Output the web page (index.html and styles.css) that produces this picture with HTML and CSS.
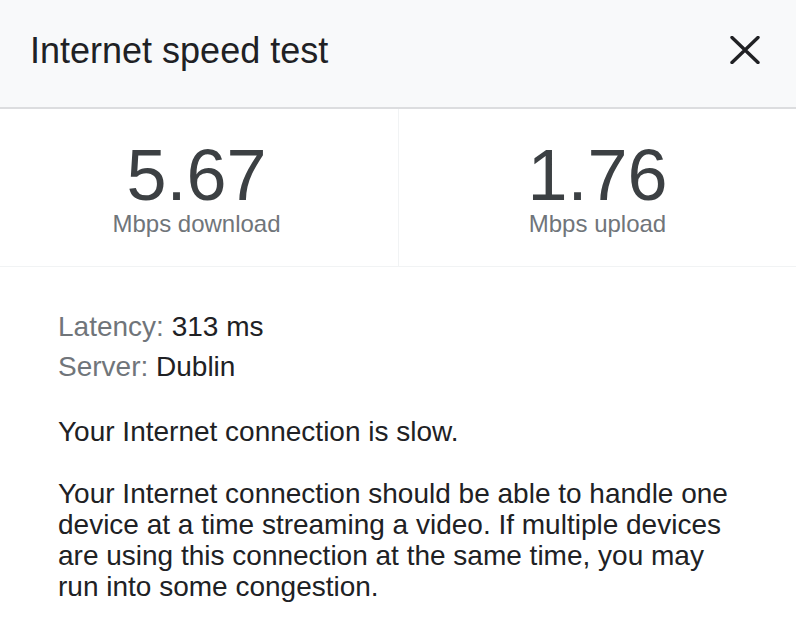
FILE: index.html
```html
<!DOCTYPE html>
<html lang="en">
<head>
<meta charset="utf-8">
<title>Internet speed test</title>
<link rel="stylesheet" href="styles.css">
</head>
<body>
<div class="dialog">
  <header class="header">
    <h1 class="title">Internet speed test</h1>
    <button class="close" aria-label="Close">
      <svg width="30" height="28" viewBox="0 0 30 28" aria-hidden="true">
        <path d="M2 1.5 L28 26.5 M28 1.5 L2 26.5" stroke="#202124" stroke-width="3.4" stroke-linecap="round" fill="none"/>
      </svg>
    </button>
  </header>
  <section class="stats">
    <div class="stat">
      <div class="stat-value">5.67</div>
      <div class="stat-label">Mbps download</div>
    </div>
    <div class="stat">
      <div class="stat-value">1.76</div>
      <div class="stat-label">Mbps upload</div>
    </div>
  </section>
  <section class="details">
    <div class="info">
      <div class="info-row"><span class="info-key">Latency:</span> 313 ms</div>
      <div class="info-row"><span class="info-key">Server:</span> Dublin</div>
    </div>
    <p class="verdict">Your Internet connection is slow.</p>
    <p class="explain">Your Internet connection should be able to handle one device at a time streaming a video. If multiple devices are using this connection at the same time, you may run into some congestion.</p>
  </section>
</div>
</body>
</html>
```

FILE: styles.css
```css
* { box-sizing: border-box; }
html, body {
  margin: 0;
  padding: 0;
  background: #ffffff;
}
body {
  font-family: "Liberation Sans", Arial, sans-serif;
  color: #202124;
}
.dialog {
  width: 796px;
  min-height: 632px;
  background: #fff;
}
.header {
  height: 109px;
  padding: 31px 36px 0 30px;
  background: #f8f9fa;
  border-bottom: 2px solid #dcdddf;
  display: flex;
  align-items: flex-start;
  justify-content: space-between;
}
.title {
  margin: 0;
  font-size: 36px;
  line-height: 40px;
  font-weight: normal;
  color: #202124;
}
.close {
  border: 0;
  padding: 0;
  margin-top: 5px;
  background: transparent;
  width: 30px;
  height: 28px;
  display: flex;
}
.stats {
  display: grid;
  grid-template-columns: 1fr 1fr;
  border-bottom: 1px solid #f1f3f4;
}
.stat {
  padding: 30px 0 29px;
  text-align: center;
}
.stat + .stat {
  border-left: 1px solid #f1f3f4;
}
.stat:first-child {
  padding-right: 5px;
}
.stat-value {
  font-size: 72px;
  line-height: 72px;
  color: #3c4043;
}
.stat-label {
  font-size: 24px;
  line-height: 26px;
  color: #70757a;
}
.details {
  padding: 40px 58px 0 58px;
  font-size: 28px;
}
.info-row {
  line-height: 40px;
  color: #202124;
}
.info-key {
  color: #70757a;
}
.verdict {
  margin: 29px 0 0;
  line-height: 31px;
}
.explain {
  margin: 31px 0 0;
  line-height: 31px;
}
```
